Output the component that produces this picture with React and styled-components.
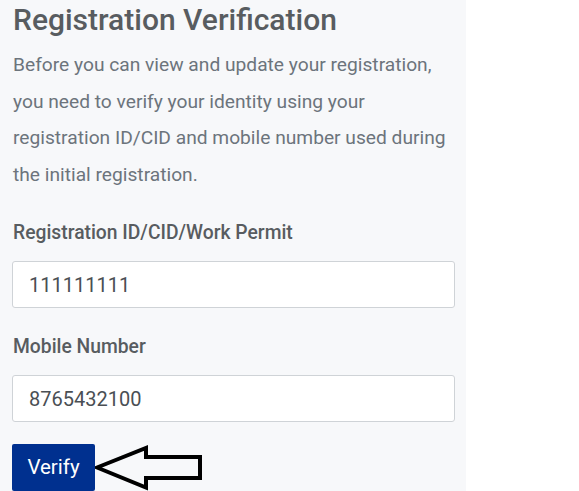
import React from "react";
import styled, { createGlobalStyle } from "styled-components";

const Global = createGlobalStyle`
  html, body { margin: 0; padding: 0; background: #ffffff; }
  body { font-family: Roboto, "Noto Sans", Arial, sans-serif; }
  * { box-sizing: border-box; }
`;

const Page = styled.div`
  display: flex;
  width: 579px;
  height: 491px;
  overflow: hidden;
`;

const Panel = styled.section`
  width: 466px;
  background: #f7f8fa;
  padding: 2px 11px 0 12px;
  display: flex;
  flex-direction: column;
`;

const Title = styled.h2`
  margin: 0;
  font-size: 30px;
  line-height: 36px;
  font-weight: 500;
  color: #585c60;
  padding-left: 1px;
`;

const Intro = styled.p`
  margin: 9px 0 0;
  font-size: 19.2px;
  line-height: 36.5px;
  color: #6c747c;
  padding-left: 1px;
`;

const Field = styled.div`
  display: flex;
  flex-direction: column;
  margin-top: ${(p) => p.$top}px;
`;

const Label = styled.label`
  font-size: 19.3px;
  line-height: 24px;
  font-weight: 500;
  color: #585c60;
  padding-left: 1px;
  margin-bottom: 16px;
`;

const Input = styled.input`
  width: 443px;
  height: 47px;
  border: 1px solid #cfd3d7;
  border-radius: 3px;
  background: #ffffff;
  padding: 0 16px;
  font-family: Roboto, Arial, sans-serif;
  font-size: 20px;
  color: #4a4f54;
  outline: none;
`;

const Actions = styled.div`
  display: flex;
  align-items: center;
  margin-top: 21px;
`;

const Button = styled.button`
  width: 83px;
  height: 47px;
  border: none;
  border-radius: 2px;
  background: #00308f;
  color: #ffffff;
  font-family: Roboto, Arial, sans-serif;
  font-size: 20.5px;
  padding: 0;
`;

const Arrow = styled.svg`
  display: block;
  flex: none;
`;

export default function App() {
  return (
    <>
      <Global />
      <Page>
        <Panel>
          <Title>Registration Verification</Title>
          <Intro>
            Before you can view and update your registration, you need to verify
            your identity using your registration ID/CID and mobile number used
            during the initial registration.
          </Intro>
          <Field $top={28}>
            <Label>Registration ID/CID/Work Permit</Label>
            <Input defaultValue="111111111" />
          </Field>
          <Field $top={27}>
            <Label>Mobile Number</Label>
            <Input defaultValue="8765432100" />
          </Field>
          <Actions>
            <Button>Verify</Button>
            <Arrow width="110" height="48" viewBox="0 0 110 48">
              <path
                d="M2 24.5 L51 5 L51 14 L105 14 L105 35 L51 35 L51 44.5 Z"
                fill="none"
                stroke="#000"
                strokeWidth="4"
                strokeLinejoin="miter"
              />
            </Arrow>
          </Actions>
        </Panel>
      </Page>
    </>
  );
}
